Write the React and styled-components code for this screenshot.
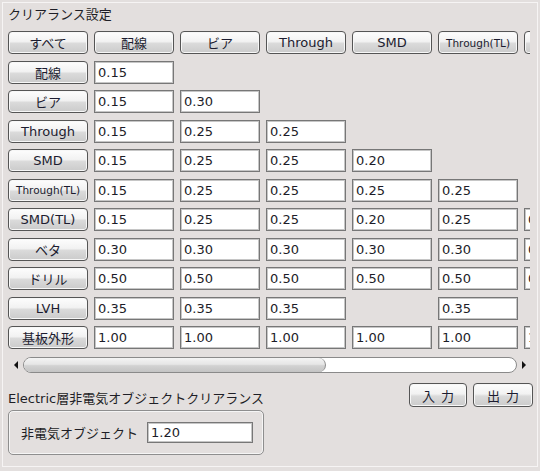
import styled, { createGlobalStyle } from "styled-components";

const columns = ["配線", "ビア", "Through", "SMD", "Through(TL)", "SMD(TL)"];

const rows = [
  { label: "配線", values: ["0.15"] },
  { label: "ビア", values: ["0.15", "0.30"] },
  { label: "Through", values: ["0.15", "0.25", "0.25"] },
  { label: "SMD", values: ["0.15", "0.25", "0.25", "0.20"] },
  { label: "Through(TL)", small: true, values: ["0.15", "0.25", "0.25", "0.25", "0.25"] },
  { label: "SMD(TL)", values: ["0.15", "0.25", "0.25", "0.20", "0.25", "0.20"] },
  { label: "ベタ", values: ["0.30", "0.30", "0.30", "0.30", "0.30", "0.30"] },
  { label: "ドリル", values: ["0.50", "0.50", "0.50", "0.50", "0.50", "0.50"] },
  { label: "LVH", values: ["0.35", "0.35", "0.35", null, "0.35", null] },
  { label: "基板外形", values: ["1.00", "1.00", "1.00", "1.00", "1.00", "1.00"] },
];

const App = () => {
  return (
    <>
      <GlobalStyle />
      <Page>
        <Frame>
          <Title>クリアランス設定</Title>

          <Viewport>
            <Row>
              <CellButton>すべて</CellButton>
              {columns.map((c) => (
                <CellButton key={c} small={c === "Through(TL)"}>{c}</CellButton>
              ))}
            </Row>
            {rows.map((r) => (
              <Row key={r.label}>
                <CellButton small={r.small}>{r.label}</CellButton>
                {r.values.map((v, i) =>
                  v === null ? <Blank key={i} /> : <CellInput key={i} defaultValue={v} />
                )}
              </Row>
            ))}
          </Viewport>

          <ScrollBar>
            <ArrowZone><ArrowLeft /></ArrowZone>
            <Track>
              <Thumb />
            </Track>
            <ArrowZone><ArrowRight /></ArrowZone>
          </ScrollBar>

          <Bottom>
            <GroupColumn>
              <GroupLabel>Electric層非電気オブジェクトクリアランス</GroupLabel>
              <GroupBox>
                <FieldLabel>非電気オブジェクト</FieldLabel>
                <FieldInput defaultValue="1.20" />
              </GroupBox>
            </GroupColumn>
            <ActionBar>
              <ActionButton w={58}>入 力</ActionButton>
              <ActionButton w={60}>出 力</ActionButton>
            </ActionBar>
          </Bottom>
        </Frame>
      </Page>
    </>
  );
};

export default App;

const GlobalStyle = createGlobalStyle`
  html, body {
    margin: 0;
    background: #e3dfde;
  }
  * {
    box-sizing: border-box;
  }
`;

const Page = styled.div`
  width: 540px;
  height: 471px;
  padding: 2px 2px 4px 2px;
  background: #e3dfde;
  font-family: "DejaVu Sans", "Noto Sans CJK JP", sans-serif;
  font-size: 13px;
  color: #1e1e26;
`;

const Frame = styled.div`
  height: 100%;
  border: 1px solid #f6f4f4;
  padding: 2px 4px 0 5px;
  display: flex;
  flex-direction: column;
`;

const Title = styled.div`
  height: 20px;
  line-height: 20px;
`;

const Viewport = styled.div`
  margin-top: 6px;
  width: 522px;
  overflow: hidden;
  display: flex;
  flex-direction: column;
  gap: 6.5px;
`;

const Row = styled.div`
  display: flex;
  gap: 6px;
  height: 23px;
`;

const CellButton = styled.button`
  flex: 0 0 80px;
  width: 80px;
  height: 23px;
  padding: 0;
  font-family: "DejaVu Sans", "Noto Sans CJK JP", sans-serif;
  font-size: ${(p) => (p.small ? "10.5px" : "13px")};
  color: #1c1c30;
  white-space: nowrap;
  border: 1px solid #555;
  border-radius: 4px;
  box-shadow: inset 0 0 0 1px #f7f7f7;
  background: linear-gradient(to bottom, #fdfdfd 0%, #f2f2f2 45%, #dadada 55%, #cbcbcb 100%);
`;

const CellInput = styled.input`
  flex: 0 0 80px;
  width: 80px;
  height: 23px;
  padding: 0 0 0 3px;
  font-family: "DejaVu Sans", sans-serif;
  font-size: 13px;
  color: #1c1c28;
  background: #fff;
  border: 1px solid #777;
  box-shadow: inset 0 0 0 1px #c6c6c6;
  outline: none;
`;

const Blank = styled.div`
  flex: 0 0 80px;
`;

const ScrollBar = styled.div`
  margin-top: 8px;
  width: 523px;
  height: 16px;
  display: flex;
  align-items: center;
`;

const ArrowZone = styled.div`
  width: 15px;
  height: 16px;
  display: flex;
  align-items: center;
  justify-content: center;
  &:last-child {
    width: 14px;
  }
`;

const ArrowLeft = styled.div`
  width: 0;
  height: 0;
  border-top: 4px solid transparent;
  border-bottom: 4px solid transparent;
  border-right: 4px solid #111;
`;

const ArrowRight = styled.div`
  width: 0;
  height: 0;
  border-top: 4px solid transparent;
  border-bottom: 4px solid transparent;
  border-left: 4px solid #111;
`;

const Track = styled.div`
  flex: 1;
  height: 16px;
  background: #fff;
  border: 1px solid #8a8a8a;
  border-radius: 8px;
  overflow: hidden;
  display: flex;
`;

const Thumb = styled.div`
  width: 302px;
  height: 100%;
  border-right: 1px solid #8a8a8a;
  border-radius: 0 7px 7px 0;
  background: linear-gradient(to bottom, #f4f4f4 0%, #e6e6e6 45%, #d2d2d2 55%, #c4c4c4 100%);
`;

const Bottom = styled.div`
  margin-top: 10px;
  display: flex;
  justify-content: space-between;
  align-items: flex-start;
`;

const GroupColumn = styled.div`
  padding-top: 8px;
  display: flex;
  flex-direction: column;
`;

const GroupLabel = styled.div`
  line-height: 16px;
  white-space: nowrap;
`;

const GroupBox = styled.div`
  margin-top: 3px;
  width: 256px;
  height: 45px;
  border: 1px solid #8e8e8e;
  border-radius: 5px;
  box-shadow: inset 0 0 0 1px #f5f5f5;
  padding: 0 10px 0 12px;
  display: flex;
  align-items: center;
  justify-content: space-between;
`;

const FieldLabel = styled.span`
  white-space: nowrap;
`;

const FieldInput = styled(CellInput)`
  flex: 0 0 106px;
  width: 106px;
  height: 21px;
`;

const ActionBar = styled.div`
  display: flex;
  gap: 6px;
`;

const ActionButton = styled(CellButton)`
  flex: 0 0 ${(p) => p.w}px;
  width: ${(p) => p.w}px;
  height: 24px;
  font-family: "Noto Sans CJK JP", sans-serif;
  word-spacing: 3px;
`;
